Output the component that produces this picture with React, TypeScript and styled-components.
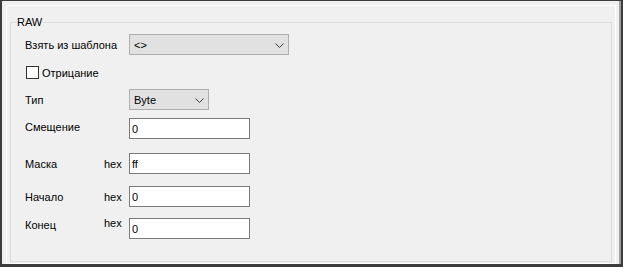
import React from 'react';
import styled, { createGlobalStyle } from 'styled-components';

const GlobalStyle = createGlobalStyle`
  html, body {
    margin: 0;
    padding: 0;
    background: #f0f0f0;
  }
  body {
    font-family: "Liberation Sans", Arial, sans-serif;
    font-size: 11px;
    color: #000;
  }
`;

const Chevron: React.FC = () => (
    <svg width="9" height="5" viewBox="0 0 9 5">
        <polyline points="0.5,0.5 4.5,4.5 8.5,0.5" fill="none" stroke="#3c3c3c" strokeWidth="1" />
    </svg>
);

const App: React.FC = () => {
    return (
        <>
            <GlobalStyle />
            <Frame>
                <Panel>
                    <GroupBox>
                        <Legend>RAW</Legend>

                        <Row $mt={11} $h={21}>
                            <Label $span={2}>Взять из шаблона</Label>
                            <Combo $w={160}>
                                <span>&lt;&gt;</span>
                                <Chevron />
                            </Combo>
                        </Row>

                        <CheckRow $mt={11}>
                            <CheckBox />
                            <span>Отрицание</span>
                        </CheckRow>

                        <Row $mt={10} $h={21}>
                            <Label $span={2}>Тип</Label>
                            <Combo $w={80}>
                                <span>Byte</span>
                                <Chevron />
                            </Combo>
                        </Row>

                        <Row $mt={8} $h={21}>
                            <Label $span={2} $shift={-1.5}>Смещение</Label>
                            <TextBox>0</TextBox>
                        </Row>

                        <Row $mt={14} $h={21}>
                            <Label>Маска</Label>
                            <Label>hex</Label>
                            <TextBox>ff</TextBox>
                        </Row>

                        <Row $mt={12} $h={21}>
                            <Label>Начало</Label>
                            <Label>hex</Label>
                            <TextBox>0</TextBox>
                        </Row>

                        <Row $mt={9} $h={21}>
                            <Label $shift={-3.5}>Конец</Label>
                            <Label $shift={-5.5}>hex</Label>
                            <TextBox>0</TextBox>
                        </Row>
                    </GroupBox>
                </Panel>
            </Frame>
        </>
    );
};

// Styled Components
const Frame = styled.div`
  width: 623px;
  height: 267px;
  box-sizing: border-box;
  display: flex;
  flex-direction: column;
  background: #f0f0f0;
  border-style: solid;
  border-color: #3c3c3c;
  border-width: 1px 2px 3px 2px;
  box-shadow: inset -2px 0 0 #a0a0a0;
  padding: 4px 5px 0 4px;
`;

const Panel = styled.div`
  flex: 1;
  display: flex;
  flex-direction: column;
  border: 1px solid #ffffff;
`;

const GroupBox = styled.div`
  position: relative;
  flex: 1;
  margin: 16px 3px 1px 3px;
  border: 1px solid #dcdcdc;
  padding: 0 0 0 14px;
`;

const Legend = styled.span`
  position: absolute;
  top: -8px;
  left: 5px;
  padding: 0 1px;
  line-height: 14px;
  background: #f0f0f0;
`;

const Row = styled.div<{ $mt: number; $h: number }>`
  display: grid;
  grid-template-columns: 79px 25px auto;
  align-items: center;
  justify-items: start;
  margin-top: ${p => p.$mt}px;
  height: ${p => p.$h}px;
`;

const Label = styled.span<{ $span?: number; $shift?: number }>`
  grid-column: span ${p => p.$span || 1};
  line-height: 14px;
  white-space: nowrap;
  margin-bottom: ${p => -(p.$shift || 0) * 2}px;
`;

const Combo = styled.div<{ $w: number }>`
  box-sizing: border-box;
  width: ${p => p.$w}px;
  height: 21px;
  display: flex;
  align-items: center;
  justify-content: space-between;
  padding: 0 4px 0 4px;
  background: #e1e1e1;
  border: 1px solid #adadad;

  & svg {
    margin-top: 1px;
  }
`;

const TextBox = styled.div`
  box-sizing: border-box;
  width: 121px;
  height: 21px;
  display: flex;
  align-items: center;
  padding: 0 2px;
  background: #ffffff;
  border: 1px solid #7a7a7a;
`;

const CheckRow = styled.div<{ $mt: number }>`
  display: flex;
  align-items: center;
  gap: 3px;
  height: 13px;
  margin-top: ${p => p.$mt}px;
  margin-left: 1px;
`;

const CheckBox = styled.span`
  box-sizing: border-box;
  width: 13px;
  height: 13px;
  background: #ffffff;
  border: 1px solid #333333;
`;

export default App;
